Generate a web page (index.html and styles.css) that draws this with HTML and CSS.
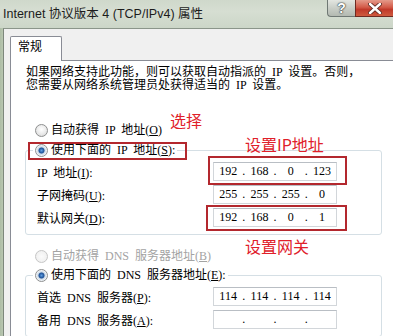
FILE: index.html
```html
<!DOCTYPE html>
<html lang="zh-CN">
<head>
    <meta charset="UTF-8">
    <meta name="viewport" content="width=device-width, initial-scale=1.0">
    <title>Internet 协议版本 4 (TCP/IPv4) 属性</title>
    <link rel="stylesheet" href="styles.css">
</head>
<body>
    <div class="window">
        <div class="titlebar">
            <span class="title">Internet 协议版本 4 (TCP/IPv4) 属性</span>
            <div class="caption-buttons">
                <span class="btn-help">?</span>
                <span class="btn-close">
                    <svg width="14" height="11" viewBox="0 0 14 11">
                        <path d="M2 1 L12 10 M12 1 L2 10" stroke="#5b2a22" stroke-width="4.2" stroke-linecap="round"/>
                        <path d="M2 1 L12 10 M12 1 L2 10" stroke="#ffffff" stroke-width="2.4" stroke-linecap="round"/>
                    </svg>
                </span>
            </div>
        </div>

        <div class="client">
            <div class="tabs"><span class="tab">常规</span></div>
            <div class="panel">
                <p class="desc">如果网络支持此功能，则可以获取自动指派的 IP 设置。否则，<br>您需要从网络系统管理员处获得适当的 IP 设置。</p>

                <div class="radio-row first"><span class="radio"></span>自动获得 IP 地址(<u>O</u>)</div>
                <fieldset class="group">
                    <legend class="radio-row"><span class="radio checked"></span>使用下面的 IP 地址(<u>S</u>):</legend>
                    <div class="field-row">
                        <span class="label">IP 地址(<u>I</u>):</span>
                        <span class="ip"><span>192</span><i>.</i><span>168</span><i>.</i><span>0</span><i>.</i><span>123</span></span>
                    </div>
                    <div class="field-row">
                        <span class="label">子网掩码(<u>U</u>):</span>
                        <span class="ip"><span>255</span><i>.</i><span>255</span><i>.</i><span>255</span><i>.</i><span>0</span></span>
                    </div>
                    <div class="field-row">
                        <span class="label">默认网关(<u>D</u>):</span>
                        <span class="ip"><span>192</span><i>.</i><span>168</span><i>.</i><span>0</span><i>.</i><span>1</span></span>
                    </div>
                </fieldset>

                <div class="radio-row second disabled"><span class="radio"></span>自动获得 DNS 服务器地址(<u>B</u>)</div>
                <fieldset class="group">
                    <legend class="radio-row"><span class="radio checked"></span>使用下面的 DNS 服务器地址(<u>E</u>):</legend>
                    <div class="field-row">
                        <span class="label">首选 DNS 服务器(<u>P</u>):</span>
                        <span class="ip"><span>114</span><i>.</i><span>114</span><i>.</i><span>114</span><i>.</i><span>114</span></span>
                    </div>
                    <div class="field-row">
                        <span class="label">备用 DNS 服务器(<u>A</u>):</span>
                        <span class="ip"><span></span><i>.</i><span></span><i>.</i><span></span><i>.</i><span></span></span>
                    </div>
                </fieldset>

                <!-- hand-drawn annotations -->
                <span class="note note-select">选择</span>
                <span class="note note-ip">设置IP地址</span>
                <span class="note note-gw">设置网关</span>
                <span class="mark mark-radio"></span>
                <span class="mark mark-ip"></span>
                <span class="mark mark-gw"></span>
            </div>
        </div>
    </div>
</body>
</html>
```

FILE: styles.css
```css
body {
    margin: 0;
    background-color: #ffffff;
}
.window {
    width: 393px;
    height: 336px;
    overflow: hidden;
    background: linear-gradient(90deg, #aebda6 0, #b9c7b1 3px, #b9c7b1 100%);
    font-family: 'Liberation Serif', 'Noto Sans CJK SC', serif;
    font-size: 12px;
    color: #000;
}

/* title bar */
.titlebar {
    height: 28px;
    display: flex;
    justify-content: space-between;
    align-items: flex-start;
    background: linear-gradient(180deg, #cfd8cb 0, #d6ded2 40%, #ccd6c8 100%);
}
.title {
    font-family: 'Liberation Sans', 'Noto Sans CJK SC', sans-serif;
    font-size: 12.5px;
    line-height: 28px;
    padding-left: 3px;
    color: #1c1c1c;
}
.caption-buttons { display: flex; }
.btn-help {
    width: 28px;
    height: 17px;
    box-sizing: border-box;
    border: 1px solid #6f7874;
    border-top: none;
    border-right: none;
    border-radius: 0 0 0 4px;
    background: linear-gradient(180deg, #e3e6e1 0, #c9cec7 50%, #b3b9b1 100%);
    color: #fff;
    font-family: 'Liberation Sans', sans-serif;
    font-weight: bold;
    font-size: 14px;
    line-height: 16px;
    text-align: center;
    text-shadow: 0 0 1px #3c4340, 0 0 1px #3c4340, 0 0 2px #3c4340;
}
.btn-close {
    width: 38px;
    height: 17px;
    box-sizing: border-box;
    border: 1px solid #6e2a22;
    border-top: none;
    border-right: none;
    background: linear-gradient(180deg, #e49a8a 0, #d35b49 45%, #c0392a 60%, #cf5a3e 100%);
    display: flex;
    align-items: center;
    justify-content: center;
}

/* dialog body */
.client {
    margin-left: 3px;
    border-top: 1px solid #8b958a;
    border-left: 1px solid #7d877c;
    background-color: #f0f0f0;
    padding: 7px 0 0 6px;
    height: 400px;
}
.tabs { display: flex; }
.tab {
    position: relative;
    z-index: 1;
    width: 52px;
    height: 25px;
    box-sizing: border-box;
    border: 1px solid #898c95;
    border-bottom: none;
    border-radius: 2px 2px 0 0;
    background-color: #ffffff;
    margin-bottom: -1px;
    padding-left: 7px;
    line-height: 20px;
}
.panel {
    position: relative;
    width: 420px;
    height: 320px;
    border: 1px solid #898c95;
    background-color: #ffffff;
    word-spacing: 3px;
}
.desc {
    margin: 0;
    padding: 5px 0 0 15px;
    line-height: 13px;
}

.radio-row {
    display: flex;
    align-items: center;
    height: 19px;
    line-height: 19px;
    white-space: nowrap;
}
.radio-row.first { margin: 29px 0 0 24px; }
.radio-row.second { margin: 12px 0 0 24px; }
.radio-row.disabled { color: #a3a3a3; }
.radio {
    width: 13px;
    height: 13px;
    box-sizing: border-box;
    border-radius: 50%;
    border: 1px solid #8e8f8f;
    background: radial-gradient(circle at 50% 40%, #ffffff 0, #eeeeee 45%, #d4d4d4 100%);
    margin-right: 3px;
    flex-shrink: 0;
}
.radio.checked {
    background: radial-gradient(circle at 50% 50%, #5f9de0 0, #1b4f95 2.6px, #c9d6e4 3.4px, #f4f7fa 5.5px);
}
.disabled .radio {
    border-color: #c6c6c6;
    background: radial-gradient(circle, #fbfbfb 0, #ececec 100%);
}

.group {
    margin: 1px 0 0 14px;
    width: 357px;
    box-sizing: border-box;
    padding: 0 0 5px 0;
    border: 1px solid #d5dfe5;
    border-radius: 3px;
    min-inline-size: 0;
}
.radio-row.disabled + .group { margin-top: 0; }
.group legend {
    margin-left: 7px;
    padding: 0 2px;
}
.field-row {
    display: grid;
    grid-template-columns: 187px 124px;
    align-items: center;
    height: 23px;
}
.label { padding-left: 11px; white-space: nowrap; }
.ip {
    display: grid;
    grid-template-columns: 1fr auto 1fr auto 1fr auto 1fr;
    align-items: center;
    height: 19px;
    box-sizing: border-box;
    border: 1px solid #d2d6da;
    border-top-color: #b9bec4;
    text-align: center;
    line-height: 17px;
}
.ip i { font-style: normal; }

/* annotations */
.note {
    position: absolute;
    color: #e0202a;
    font-family: 'Noto Sans CJK SC', sans-serif;
    font-size: 16px;
    line-height: 16px;
    word-spacing: 0;
    white-space: nowrap;
}
.note-select { left: 159px; top: 51px; }
.note-ip { left: 234px; top: 75px; }
.note-gw { left: 234px; top: 177px; }
.mark {
    position: absolute;
    border: 2px solid #b3282e;
    box-sizing: border-box;
}
.mark-radio { left: 17px; top: 81px; width: 159px; height: 18px; }
.mark-ip { left: 197px; top: 95px; width: 139px; height: 29px; }
.mark-gw { left: 195px; top: 144px; width: 141px; height: 26px; }
```
